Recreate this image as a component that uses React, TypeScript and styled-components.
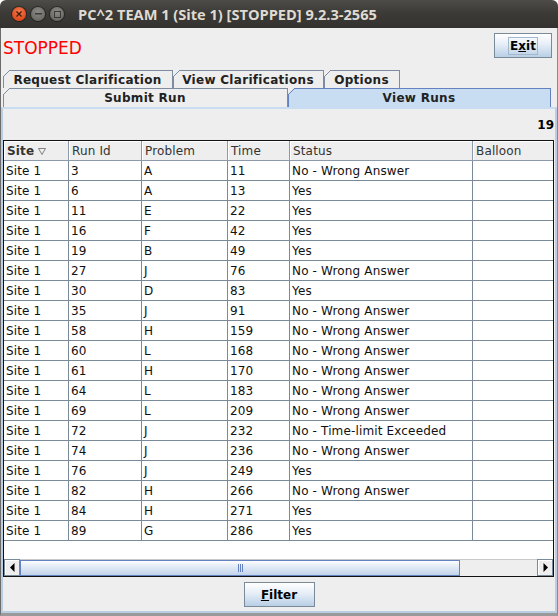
import React from 'react';
import styled, { createGlobalStyle } from 'styled-components';

const GlobalStyle = createGlobalStyle`
  html, body {
    margin: 0;
    padding: 0;
    background: #ffffff;
  }
  body {
    font-family: "DejaVu Sans", sans-serif;
    font-size: 12px;
  }
`;

const Window = styled.div`
  width: 558px;
  height: 616px;
  display: flex;
  flex-direction: column;
  overflow: hidden;
`;

const TitleBar = styled.div`
  height: 28px;
  flex: none;
  display: flex;
  align-items: center;
  padding-left: 12px;
  background: linear-gradient(#4d4c47, #3c3b37 45%, #33322e);
  border-radius: 6px 6px 0 0;
`;

const WinButtons = styled.div`
  display: flex;
  gap: 5px;
`;

const WinButton = styled.div<{ $close?: boolean }>`
  width: 14px;
  height: 14px;
  border-radius: 50%;
  display: flex;
  align-items: center;
  justify-content: center;
  background: ${p =>
    p.$close
      ? 'radial-gradient(circle at 50% 35%, #f57b4f, #df4a1c 70%)'
      : 'radial-gradient(circle at 50% 35%, #8c8a84, #6a6963 75%)'};
  box-shadow: 0 0 0 1px rgba(0, 0, 0, 0.35);
`;

const Title = styled.div`
  margin-left: 14px;
  color: #dfdbd2;
  font-family: "Open Sans", sans-serif;
  font-weight: 700;
  font-size: 14.6px;
  white-space: nowrap;
`;

const Body = styled.div`
  flex: 1;
  display: flex;
  flex-direction: column;
  background: #eeeeee;
  border-left: 1px solid #6b6b6b;
  border-right: 1px solid #8a8a8a;
  border-bottom: 3px solid #9a9a9a;
  min-height: 0;
`;

const TopRow = styled.div`
  height: 42px;
  flex: none;
  display: flex;
  justify-content: space-between;
  align-items: flex-start;
  padding: 0 5px 0 2px;
`;

const StatusText = styled.div`
  margin-top: 10px;
  color: #ff0000;
  font-size: 17px;
`;

const SwingButton = styled.button<{ $w: number }>`
  width: ${p => p.$w}px;
  height: 25px;
  padding: 0;
  border: 1px solid #7a8a99;
  background: linear-gradient(#ffffff, #e6eef7 45%, #b8cfe5);
  font-family: "DejaVu Sans", sans-serif;
  font-weight: 700;
  font-size: 12px;
  color: #000000;
  display: flex;
  align-items: center;
  justify-content: center;
`;

const ExitButton = styled(SwingButton)`
  margin-top: 5px;
`;

const FocusBox = styled.span`
  padding: 1px 1px;
  border: 1px solid #a3b8cc;
  line-height: 14px;
`;

const Mnemonic = styled.span`
  text-decoration: underline;
`;

const TabRow = styled.div<{ $h: number }>`
  height: ${p => p.$h}px;
  flex: none;
  display: flex;
  padding-left: 2px;
`;

const Tab = styled.div<{ $w: number; $selected?: boolean }>`
  position: relative;
  width: ${p => p.$w}px;
  height: 100%;
  box-sizing: border-box;
  display: flex;
  align-items: center;
  justify-content: center;
  font-weight: 700;
  font-size: 12px;
  letter-spacing: 0.3px;
  color: #222222;
  background: ${p => (p.$selected ? '#c8ddf2' : '#eeeeee')};
  border-right: 1px solid ${p => (p.$selected ? '#6382bf' : '#7d8ca0')};
  clip-path: polygon(6px 0, 100% 0, 100% 100%, 0 100%, 0 6px);
  padding-top: 1px;

  &::before {
    content: '';
    position: absolute;
    left: 6px;
    right: 0;
    top: 0;
    height: 1px;
    background: ${p => (p.$selected ? '#6382bf' : '#7d8ca0')};
  }
  &::after {
    content: '';
    position: absolute;
    left: 0;
    top: 6px;
    bottom: 0;
    width: 1px;
    background: ${p => (p.$selected ? '#6382bf' : '#7d8ca0')};
  }
`;

const TabSlant = styled.svg`
  position: absolute;
  left: 0;
  top: 0;
`;

const Panel = styled.div`
  flex: 1;
  min-height: 0;
  display: flex;
  flex-direction: column;
  border-top: 2px solid #c8ddf2;
  border-left: 2px solid #b9cde3;
  border-right: 2px solid #b9cde3;
  border-bottom: 2px solid #b9cde3;
`;

const CountRow = styled.div`
  height: 31px;
  flex: none;
  display: flex;
  justify-content: flex-end;
  align-items: center;
  padding-right: 1px;
  font-weight: 700;
  font-size: 12px;
  color: #000000;
`;

const TableBox = styled.div`
  flex: 1;
  min-height: 0;
  margin-right: 1px;
  border: 1px solid #111111;
  display: flex;
  flex-direction: column;
  background: #ffffff;
  overflow: hidden;
`;

const columns = '65px 73px 86px 62px 183px 200px';

const HeaderRow = styled.div`
  display: grid;
  grid-template-columns: ${columns};
  height: 20px;
  flex: none;
`;

const HeaderCell = styled.div<{ $sorted?: boolean }>`
  box-sizing: border-box;
  display: flex;
  align-items: center;
  gap: 4px;
  padding-left: 3px;
  padding-top: 1px;
  background: #eeeeee;
  border-right: 1px solid #8d9aab;
  border-bottom: 1px solid #8d9aab;
  box-shadow: inset 1px 1px 0 #ffffff;
  font-weight: ${p => (p.$sorted ? 700 : 400)};
  letter-spacing: 0.15px;
  color: #333333;
  white-space: nowrap;
`;

const Rows = styled.div`
  flex: 1;
  min-height: 0;
  overflow: hidden;
`;

const Row = styled.div`
  display: grid;
  grid-template-columns: ${columns};
  height: 20px;
`;

const Cell = styled.div`
  box-sizing: border-box;
  padding-left: 2px;
  display: flex;
  align-items: center;
  border-right: 1px solid #7a8a99;
  border-bottom: 1px solid #7a8a99;
  color: #111111;
  letter-spacing: 0.15px;
  white-space: nowrap;
  overflow: hidden;
`;

const HScroll = styled.div`
  height: 17px;
  flex: none;
  display: flex;
  background: #eeeeee;
  border-top: 1px solid #ffffff;
`;

const ArrowButton = styled.div`
  width: 16px;
  box-sizing: border-box;
  display: flex;
  align-items: center;
  justify-content: center;
  background: #eeeeee;
  border: 1px solid #7a8a99;
  box-shadow: inset 1px 1px 0 #ffffff;
`;

const Track = styled.div`
  flex: 1;
  display: flex;
  border-top: 1px solid #c9c9c9;
`;

const Thumb = styled.div`
  width: 440px;
  box-sizing: border-box;
  border: 1px solid #6382bf;
  background: linear-gradient(#ffffff, #e8eff8 30%, #c2d4ea);
  display: flex;
  align-items: center;
  justify-content: center;
`;

const Grip = styled.div`
  width: 5px;
  height: 8px;
  background: repeating-linear-gradient(90deg, #6382bf 0 1px, transparent 1px 2px);
`;

const ButtonRow = styled.div`
  height: 34px;
  flex: none;
  display: flex;
  justify-content: center;
  padding-top: 5px;
  box-sizing: border-box;
`;

type Run = [string, string, string, string];

const runs: Run[] = [
  ['3', 'A', '11', 'No - Wrong Answer'],
  ['6', 'A', '13', 'Yes'],
  ['11', 'E', '22', 'Yes'],
  ['16', 'F', '42', 'Yes'],
  ['19', 'B', '49', 'Yes'],
  ['27', 'J', '76', 'No - Wrong Answer'],
  ['30', 'D', '83', 'Yes'],
  ['35', 'J', '91', 'No - Wrong Answer'],
  ['58', 'H', '159', 'No - Wrong Answer'],
  ['60', 'L', '168', 'No - Wrong Answer'],
  ['61', 'H', '170', 'No - Wrong Answer'],
  ['64', 'L', '183', 'No - Wrong Answer'],
  ['69', 'L', '209', 'No - Wrong Answer'],
  ['72', 'J', '232', 'No - Time-limit Exceeded'],
  ['74', 'J', '236', 'No - Wrong Answer'],
  ['76', 'J', '249', 'Yes'],
  ['82', 'H', '266', 'No - Wrong Answer'],
  ['84', 'H', '271', 'Yes'],
  ['89', 'G', '286', 'Yes'],
];

const Slant = ({ selected }: { selected?: boolean }) => (
  <TabSlant width="7" height="7">
    <line x1="0.5" y1="6.5" x2="6.5" y2="0.5" stroke={selected ? '#6382bf' : '#7d8ca0'} strokeWidth="1" />
  </TabSlant>
);

export default function App() {
  return (
    <>
      <GlobalStyle />
      <Window>
        <TitleBar>
          <WinButtons>
            <WinButton $close>
              <svg width="6" height="6">
                <path d="M0.5 0.5 L5.5 5.5 M5.5 0.5 L0.5 5.5" stroke="#3a1a0c" strokeWidth="1.3" />
              </svg>
            </WinButton>
            <WinButton>
              <svg width="7" height="2">
                <rect x="0" y="0" width="7" height="1.5" fill="#3b3a36" />
              </svg>
            </WinButton>
            <WinButton>
              <svg width="7" height="7">
                <rect x="0.5" y="0.5" width="6" height="6" fill="none" stroke="#3b3a36" strokeWidth="1" />
              </svg>
            </WinButton>
          </WinButtons>
          <Title>PC^2 TEAM 1 (Site 1) [STOPPED] 9.2.3-2565</Title>
        </TitleBar>
        <Body>
          <TopRow>
            <StatusText>STOPPED</StatusText>
            <ExitButton $w={58}>
              <FocusBox>
                E<Mnemonic>x</Mnemonic>it
              </FocusBox>
            </ExitButton>
          </TopRow>
          <TabRow $h={18}>
            <Tab $w={170}>
              <Slant />
              Request Clarification
            </Tab>
            <Tab $w={151}>
              <Slant />
              View Clarifications
            </Tab>
            <Tab $w={76}>
              <Slant />
              Options
            </Tab>
          </TabRow>
          <TabRow $h={19}>
            <Tab $w={285}>
              <Slant />
              Submit Run
            </Tab>
            <Tab $w={263} $selected>
              <Slant selected />
              View Runs
            </Tab>
          </TabRow>
          <Panel>
            <CountRow>19</CountRow>
            <TableBox>
              <HeaderRow>
                <HeaderCell $sorted>
                  Site
                  <svg width="8" height="7">
                    <path d="M0.5 0.5 H7.5 L4 6.5 Z" fill="none" stroke="#666" strokeWidth="0.8" />
                  </svg>
                </HeaderCell>
                <HeaderCell>Run Id</HeaderCell>
                <HeaderCell>Problem</HeaderCell>
                <HeaderCell>Time</HeaderCell>
                <HeaderCell>Status</HeaderCell>
                <HeaderCell>Balloon</HeaderCell>
              </HeaderRow>
              <Rows>
                {runs.map(([id, problem, time, status]) => (
                  <Row key={id}>
                    <Cell>Site 1</Cell>
                    <Cell>{id}</Cell>
                    <Cell>{problem}</Cell>
                    <Cell>{time}</Cell>
                    <Cell>{status}</Cell>
                    <Cell />
                  </Row>
                ))}
              </Rows>
              <HScroll>
                <ArrowButton>
                  <svg width="5" height="9">
                    <path d="M4.5 0 V9 L0 4.5 Z" fill="#000" />
                  </svg>
                </ArrowButton>
                <Track>
                  <Thumb>
                    <Grip />
                  </Thumb>
                </Track>
                <ArrowButton>
                  <svg width="5" height="9">
                    <path d="M0.5 0 V9 L5 4.5 Z" fill="#000" />
                  </svg>
                </ArrowButton>
              </HScroll>
            </TableBox>
            <ButtonRow>
              <SwingButton $w={71}>
                <span>
                  <Mnemonic>F</Mnemonic>ilter
                </span>
              </SwingButton>
            </ButtonRow>
          </Panel>
        </Body>
      </Window>
    </>
  );
}
